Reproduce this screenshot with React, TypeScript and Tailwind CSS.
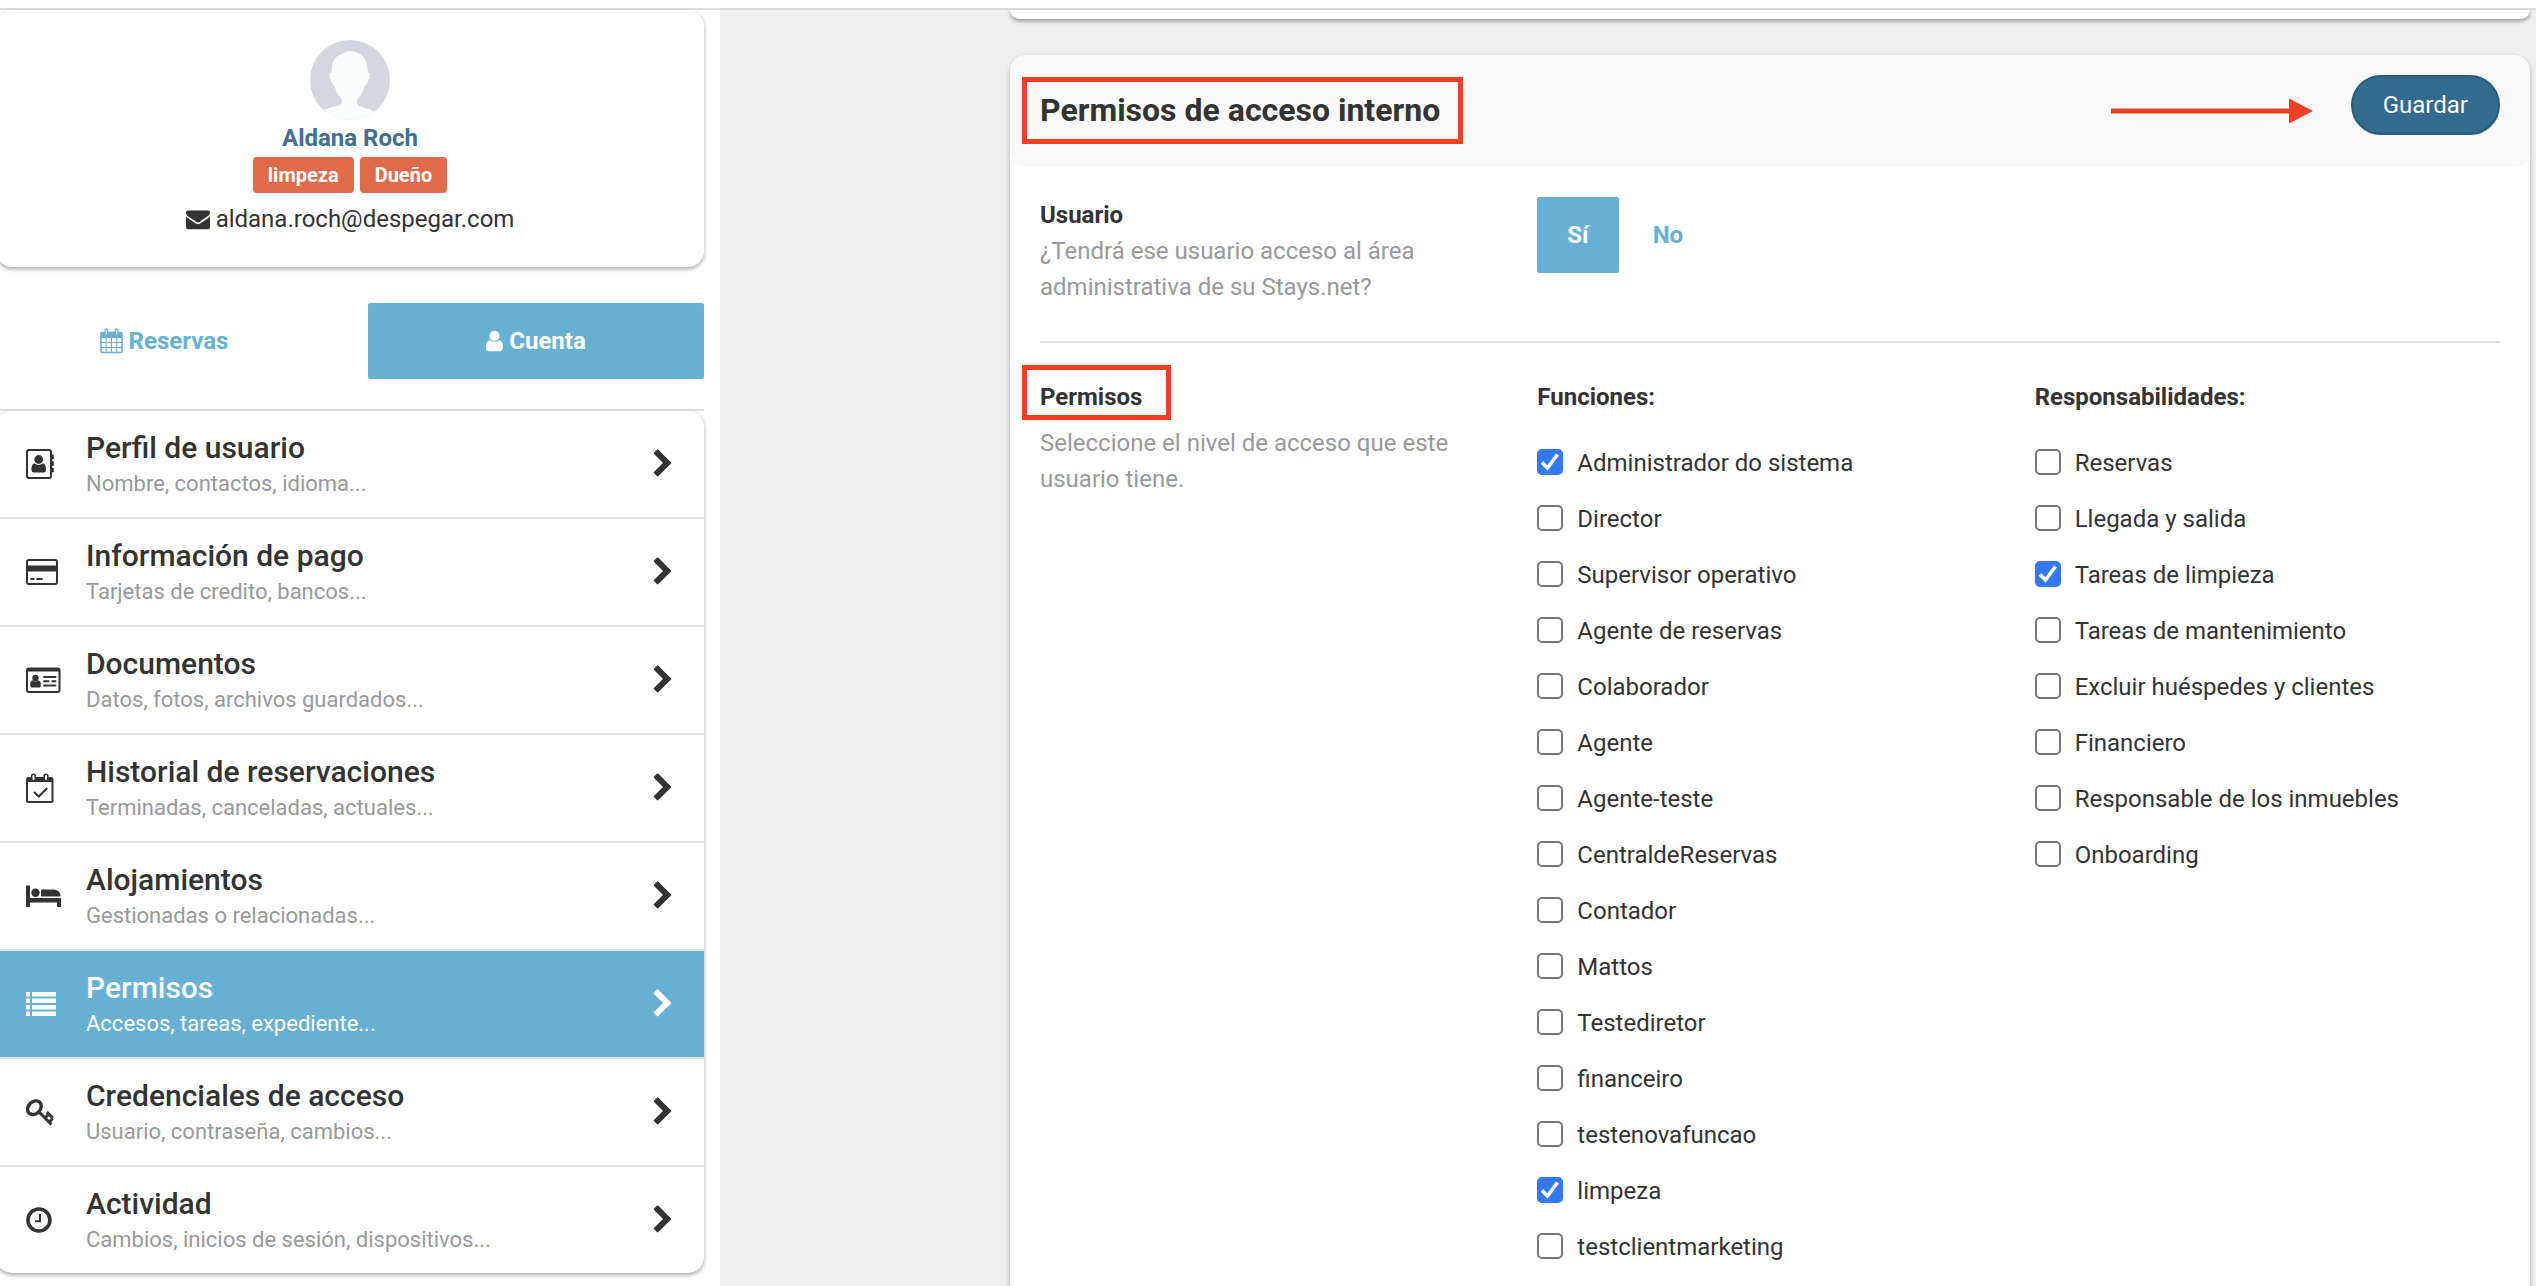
import { useState } from 'react'
import type { ReactNode } from 'react'
import clsx from 'clsx'

const ENVELOPE =
  'M1792 710v794q0 66-47 113t-113 47h-1472q-66 0-113-47t-47-113v-794q44 49 101 87 362 246 497 345 57 42 92.5 65.5t94.5 48 110 24.5h2q51 0 110-24.5t94.5-48 92.5-65.5q170-123 498-345 57-39 100-87zm0-294q0 79-49 151t-122 123q-376 261-468 325-10 7-42.5 31t-54 38.5-52 32.5-57.5 27-50 9h-2q-23 0-50-9t-57.5-27-52-32.5-54-38.5-42.5-31q-91-64-262-182.5t-205-142.5q-62-42-117-115.5t-55-136.5q0-78 41.5-130t118.5-52h1472q65 0 112.5 47t47.5 113z'
const USER =
  'M1536 1399q0 109-62.5 187t-150.5 78h-854q-88 0-150.5-78t-62.5-187q0-85 8.5-160.5t31.5-152 58.5-131 94-89 134.5-34.5q131 128 313 128t313-128q76 0 134.5 34.5t94 89 58.5 131 31.5 152 8.5 160.5zm-256-887q0 159-112.5 271.5t-271.5 112.5-271.5-112.5-112.5-271.5 112.5-271.5 271.5-112.5 271.5 112.5 112.5 271.5z'
const CHEVRON =
  'M1363 877l-742 742q-19 19-45 19t-45-19l-166-166q-19-19-19-45t19-45l531-531-531-531q-19-19-19-45t19-45l166-166q19-19 45-19t45 19l742 742q19 19 19 45t-19 45z'

function MenuIcon({ children }: { children: ReactNode }) {
  return (
    <svg viewBox="0 0 36 32" className="w-9 h-8 shrink-0" fill="currentColor" aria-hidden="true">
      {children}
    </svg>
  )
}

const icons = {
  addressBook: (
    <MenuIcon>
      <rect x="1" y="2" width="24" height="28" rx="2" fill="none" stroke="currentColor" strokeWidth="2" />
      <path d="M26 7h1.5v4H26zM26 13.5h1.5v4H26zM26 20h1.5v4H26z" stroke="currentColor" strokeWidth="0.6" />
      <circle cx="12.7" cy="11.5" r="4.4" />
      <path d="M8.5 15.2q4.2 3.4 8.4 0q3.1.8 3.1 6.2q0 3-2.600 3H8q-2.600 0-2.600-3q0-5.400 3.100-6.200z" />
    </MenuIcon>
  ),
  creditCard: (
    <MenuIcon>
      <rect x="1" y="4" width="30" height="24" rx="2" fill="none" stroke="currentColor" strokeWidth="2" />
      <path d="M1 9.500h30v6H1zM4.500 22h4v2h-4zM10.500 22h6v2h-6z" />
    </MenuIcon>
  ),
  addressCard: (
    <MenuIcon>
      <rect x="1" y="4.500" width="32.500" height="23.500" rx="2" fill="none" stroke="currentColor" strokeWidth="2" />
      <path d="M1 4h32.500v3.500H1zM17.300 12h13v2h-13zM17.300 16.300h6v2h-6zM25.500 16.300h4.800v2h-4.800zM17.300 20.500h13v2h-13z" />
      <circle cx="9.500" cy="14" r="3.200" />
      <path d="M6.500 16.300q3 2.600 6 0q2.300.700 2.300 4.400q0 2.900-2 2.900H6.200q-2 0-2-2.900q0-3.700 2.300-4.400z" />
    </MenuIcon>
  ),
  calendarCheck: (
    <MenuIcon>
      <rect x="1" y="6" width="25.500" height="24" rx="1.500" fill="none" stroke="currentColor" strokeWidth="2" />
      <path d="M1 5.500h25.500v4.500H1z" />
      <rect x="5.700" y="2.200" width="3.600" height="6.500" rx="1.800" fill="#fff" stroke="currentColor" strokeWidth="1.600" />
      <rect x="18.200" y="2.200" width="3.600" height="6.500" rx="1.800" fill="#fff" stroke="currentColor" strokeWidth="1.600" />
      <path d="M8 20l4.800 4.500l8.400-8.500" fill="none" stroke="currentColor" strokeWidth="2" />
    </MenuIcon>
  ),
  bed: (
    <MenuIcon>
      <path d="M0 5.500h4V18h31v9h-4v-4.500H4V27H0z" />
      <circle cx="9.500" cy="12.700" r="4.200" />
      <path d="M15 9.500h13q6.500.5 6.500 7H15z" />
    </MenuIcon>
  ),
  list: (
    <MenuIcon>
      <path d="M0 4h4v4.500H0zM6 4h24v4.500H6zM0 10.500h4v4.500H0zM6 10.500h24v4.500H6zM0 17h4v4.500H0zM6 17h24v4.500H6zM0 23.500h4V28H0zM6 23.500h24V28H6z" />
    </MenuIcon>
  ),
  key: (
    <MenuIcon>
      <ellipse
        cx="8.400"
        cy="11.700"
        rx="7.600"
        ry="6"
        transform="rotate(-45 8.400 11.700)"
        fill="none"
        stroke="currentColor"
        strokeWidth="3.400"
      />
      <path d="M12.500 15.500L25.500 28.500M19 22l4-4M20.800 16.200l6 5.800M23.500 26l3-3.500" fill="none" stroke="currentColor" strokeWidth="3" />
    </MenuIcon>
  ),
  clock: (
    <MenuIcon>
      <circle cx="12.900" cy="16" r="11" fill="none" stroke="currentColor" strokeWidth="3.600" />
      <path d="M14 10v7.200H9" fill="none" stroke="currentColor" strokeWidth="2" />
    </MenuIcon>
  ),
}

const menu = [
  { title: 'Perfil de usuario', text: 'Nombre, contactos, idioma...', icon: icons.addressBook },
  { title: 'Información de pago', text: 'Tarjetas de credito, bancos...', icon: icons.creditCard },
  { title: 'Documentos', text: 'Datos, fotos, archivos guardados...', icon: icons.addressCard },
  { title: 'Historial de reservaciones', text: 'Terminadas, canceladas, actuales...', icon: icons.calendarCheck },
  { title: 'Alojamientos', text: 'Gestionadas o relacionadas...', icon: icons.bed },
  { title: 'Permisos', text: 'Accesos, tareas, expediente...', icon: icons.list, active: true },
  { title: 'Credenciales de acceso', text: 'Usuario, contraseña, cambios...', icon: icons.key },
  { title: 'Actividad', text: 'Cambios, inicios de sesión, dispositivos...', icon: icons.clock },
]

const roles = [
  'Administrador do sistema',
  'Director',
  'Supervisor operativo',
  'Agente de reservas',
  'Colaborador',
  'Agente',
  'Agente-teste',
  'CentraldeReservas',
  'Contador',
  'Mattos',
  'Testediretor',
  'financeiro',
  'testenovafuncao',
  'limpeza',
  'testclientmarketing',
]

const duties = [
  'Reservas',
  'Llegada y salida',
  'Tareas de limpieza',
  'Tareas de mantenimiento',
  'Excluir huéspedes y clientes',
  'Financiero',
  'Responsable de los inmuebles',
  'Onboarding',
]

function CheckList({ title, items, initial }: { title: string; items: string[]; initial: string[] }) {
  const [checked, setChecked] = useState(initial)

  function toggle(item: string) {
    setChecked(checked.includes(item) ? checked.filter(i => i !== item) : [...checked, item])
  }

  return (
    <fieldset>
      <legend className="font-bold">{title}</legend>
      <div className="flex flex-col gap-[30px] pt-[34px]">
        {items.map(item => (
          <label key={item} className="flex items-center gap-[14px] h-[26px]">
            <span className="grid shrink-0">
              <input
                type="checkbox"
                checked={checked.includes(item)}
                onChange={() => toggle(item)}
                className="peer col-start-1 row-start-1 appearance-none w-[26px] h-[26px] bg-white border-2 border-[#767676] rounded-[5px] checked:bg-[#3478f6] checked:border-[#3478f6]"
              />
              <svg
                viewBox="0 0 26 26"
                className="col-start-1 row-start-1 w-[26px] h-[26px] pointer-events-none opacity-0 peer-checked:opacity-100"
                aria-hidden="true"
              >
                <path d="M5 13.500l5.500 5.500L20.500 5.500" fill="none" stroke="#fff" strokeWidth="3.600" />
              </svg>
            </span>
            <span className="pt-0.5">{item}</span>
          </label>
        ))}
      </div>
    </fieldset>
  )
}

function Sidebar() {
  return (
    <aside className="w-[720px] shrink-0 bg-white pr-4">
      <div className="-ml-1">
        <section className="flex flex-col items-center rounded-2xl pt-[30px] pb-[30px] shadow-[0_2px_4px_rgba(0,0,0,0.35)]">
          <svg viewBox="0 0 80 80" className="w-20 h-20 rounded-full" role="img" aria-label="Avatar">
            <rect width="80" height="80" fill="#d6d7dd" />
            <path
              d="M32 14q4-3 8.500-3q17 1 17.500 21.500l2 .5q0 8-5.700 13.700q-1.500 7-6.300 11.300q-2 3-.5 6q2 3 8 4q8 2 12 6V80H13v-9q4-3 12-4.500q6-1 7-4q0-3-1-4.500q-4.500-4-6-11.300Q19.500 42 19.300 33l2.400-.5Q21 17 32 14z"
              fill="#fbfdfd"
            />
          </svg>
          <a href="#perfil" className="font-bold text-[#41708f]">Aldana Roch</a>
          <div className="flex gap-1.5 my-px pb-[7px]">
            <span className="rounded bg-[#e06b4b] px-[15px] text-xl leading-9 font-bold text-white">limpeza</span>
            <span className="rounded bg-[#e06b4b] px-[15px] text-xl leading-9 font-bold text-white">Dueño</span>
          </div>
          <div className="flex items-center gap-1.5">
            <svg viewBox="0 0 1792 1792" className="w-6 h-6" fill="currentColor" aria-hidden="true">
              <path d={ENVELOPE} />
            </svg>
            aldana.roch@despegar.com
          </div>
        </section>

        <div className="grid grid-cols-2 gap-9 mt-9 mb-[30px]">
          <button className="flex items-center justify-center gap-1.5 h-[76px] rounded-xs font-bold text-[#66b1d3]">
            <svg viewBox="0 0 23 26" className="w-[23px] h-[26px]" fill="none" stroke="currentColor" aria-hidden="true">
              <path d="M1 4h21v6H1z" fill="currentColor" stroke="none" />
              <rect x="1" y="4.500" width="21" height="20" rx="1" strokeWidth="1.600" />
              <path d="M6.200 9v15M11.500 9v15M16.800 9v15M1 14.500h21M1 19.500h21" />
              <rect x="5" y="1" width="2.600" height="6" rx="1.300" fill="#fff" strokeWidth="1.300" />
              <rect x="15.400" y="1" width="2.600" height="6" rx="1.300" fill="#fff" strokeWidth="1.300" />
            </svg>
            Reservas
          </button>
          <button className="flex items-center justify-center gap-1.5 h-[76px] rounded-xs bg-[#66b1d3] font-bold text-white">
            <svg viewBox="256 0 1280 1792" className="w-[17px] h-6" fill="currentColor" aria-hidden="true">
              <path d={USER} />
            </svg>
            Cuenta
          </button>
        </div>

        <nav className="border-t-2 border-[#dedede]">
          <ul className="rounded-2xl divide-y-2 divide-[#dedede] shadow-[0_2px_4px_rgba(0,0,0,0.35)]">
            {menu.map(({ title, text, icon, active }) => (
              <li key={title}>
                <a
                  href="#"
                  className={clsx(
                    'flex items-center gap-6 h-[106px] pl-[30px] pr-[26px]',
                    active && 'bg-[#66b1d3] text-white',
                  )}
                >
                  {icon}
                  <span className="flex-1 pt-0.5">
                    <span className="block text-3xl leading-[38px] font-medium">{title}</span>
                    <span className={clsx('block text-[22px] leading-[34px]', !active && 'text-[#999]')}>{text}</span>
                  </span>
                  <svg viewBox="0 0 1792 1792" className="w-[30px] h-[30px]" fill="currentColor" aria-hidden="true">
                    <path d={CHEVRON} />
                  </svg>
                </a>
              </li>
            ))}
          </ul>
        </nav>
      </div>
    </aside>
  )
}

export default function App() {
  const [access, setAccess] = useState(true)

  return (
    <div className="flex flex-col h-screen overflow-hidden bg-[#efefef] text-[#333] text-2xl leading-9 font-[Roboto,sans-serif]">
      <header className="h-[10px] shrink-0 bg-white border-b-2 border-[#dedede]" />
      <div className="flex flex-1 min-h-0">
        <Sidebar />
        <main className="flex-1 min-w-0 pl-[290px] pr-1.5">
          <div className="h-[9px] bg-white rounded-b-2xl shadow-[0_2px_4px_rgba(0,0,0,0.4)]" />

          <section className="mt-9 bg-white rounded-2xl pb-[60px] shadow-[0_2px_4px_rgba(0,0,0,0.3)]">
            <div className="flex items-start justify-between h-28 px-[30px] pt-5 rounded-2xl bg-[#f8f8f8]">
              <h1 className="relative mt-4 text-[32px] leading-[38px] font-bold">
                Permisos de acceso interno
                <span className="absolute -left-[18px] -right-[23px] -top-[14px] -bottom-[15px] border-5 border-[#ee4023]" />
              </h1>
              <div className="flex items-start gap-[38px]">
                <svg viewBox="0 0 202 26" className="w-[202px] h-[26px] mt-[23px]" fill="#ee4023" aria-hidden="true">
                  <path d="M0 10.500h178V.5L202 13l-24 12.500v-10H0z" />
                </svg>
                <button className="h-[60px] px-[30px] rounded-full border-2 border-[#285b78] bg-[#316b8e] text-white">
                  Guardar
                </button>
              </div>
            </div>

            <div className="mx-[30px] grid grid-cols-3 gap-8 pt-[30px] pb-9 border-b-2 border-[#dedede]">
              <div>
                <h2 className="font-bold">Usuario</h2>
                <p className="text-[#999]">¿Tendrá ese usuario acceso al área administrativa de su Stays.net?</p>
              </div>
              <div className="flex items-start">
                <button
                  onClick={() => setAccess(true)}
                  className={clsx('h-[76px] px-[30px] rounded-xs font-bold', access ? 'bg-[#66b1d3] text-white' : 'text-[#66b1d3]')}
                >
                  Sí
                </button>
                <button
                  onClick={() => setAccess(false)}
                  className={clsx('h-[76px] px-[34px] rounded-xs font-bold', access ? 'text-[#66b1d3]' : 'bg-[#66b1d3] text-white')}
                >
                  No
                </button>
              </div>
            </div>

            <div className="mx-[30px] grid grid-cols-3 gap-8 pt-9">
              <div>
                <h2 className="relative w-fit font-bold">
                  Permisos
                  <span className="absolute -left-[18px] -right-[29px] -top-[14px] -bottom-[5px] border-5 border-[#ee4023]" />
                </h2>
                <p className="mt-[10px] text-[#999]">Seleccione el nivel de acceso que este usuario tiene.</p>
              </div>
              <CheckList title="Funciones:" items={roles} initial={['Administrador do sistema', 'limpeza']} />
              <CheckList title="Responsabilidades:" items={duties} initial={['Tareas de limpieza']} />
            </div>
          </section>
        </main>
      </div>
    </div>
  )
}
